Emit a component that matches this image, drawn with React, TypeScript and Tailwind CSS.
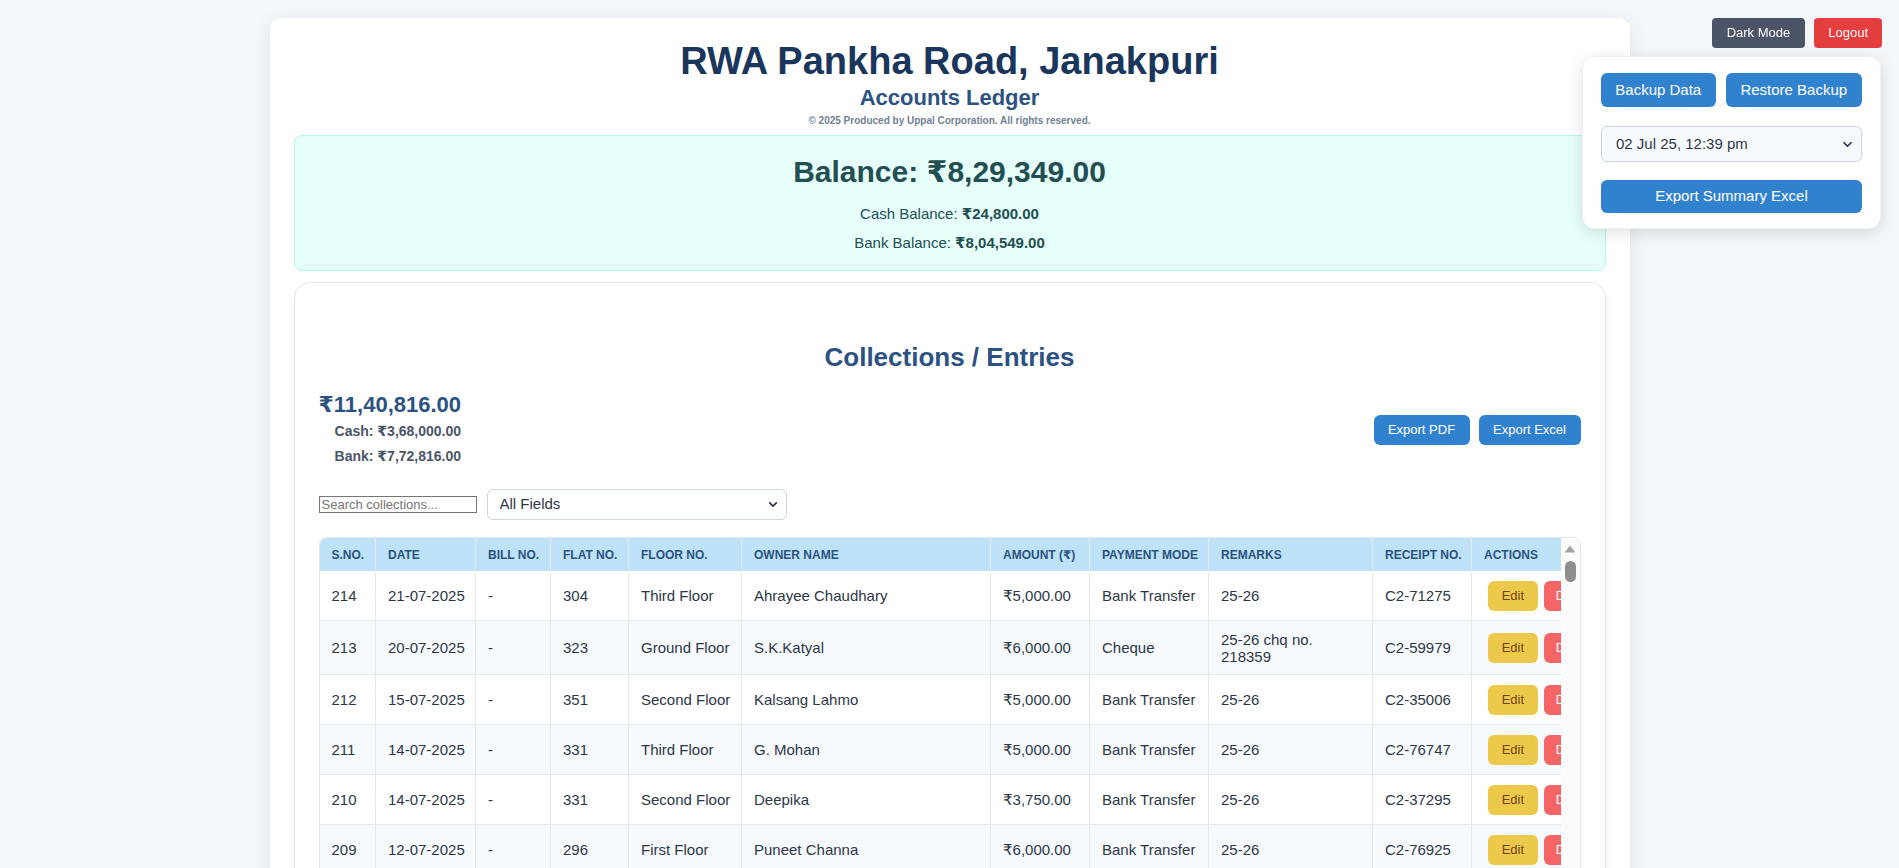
import React from 'react';

type Entry = {
  sno: number;
  date: string;
  bill: string;
  flat: string;
  floor: string;
  owner: string;
  amount: string;
  mode: string;
  remarks: string;
  receipt: string;
};

const entries: Entry[] = [
  { sno: 214, date: '21-07-2025', bill: '-', flat: '304', floor: 'Third Floor', owner: 'Ahrayee Chaudhary', amount: '₹5,000.00', mode: 'Bank Transfer', remarks: '25-26', receipt: 'C2-71275' },
  { sno: 213, date: '20-07-2025', bill: '-', flat: '323', floor: 'Ground Floor', owner: 'S.K.Katyal', amount: '₹6,000.00', mode: 'Cheque', remarks: '25-26 chq no. 218359', receipt: 'C2-59979' },
  { sno: 212, date: '15-07-2025', bill: '-', flat: '351', floor: 'Second Floor', owner: 'Kalsang Lahmo', amount: '₹5,000.00', mode: 'Bank Transfer', remarks: '25-26', receipt: 'C2-35006' },
  { sno: 211, date: '14-07-2025', bill: '-', flat: '331', floor: 'Third Floor', owner: 'G. Mohan', amount: '₹5,000.00', mode: 'Bank Transfer', remarks: '25-26', receipt: 'C2-76747' },
  { sno: 210, date: '14-07-2025', bill: '-', flat: '331', floor: 'Second Floor', owner: 'Deepika', amount: '₹3,750.00', mode: 'Bank Transfer', remarks: '25-26', receipt: 'C2-37295' },
  { sno: 209, date: '12-07-2025', bill: '-', flat: '296', floor: 'First Floor', owner: 'Puneet Channa', amount: '₹6,000.00', mode: 'Bank Transfer', remarks: '25-26', receipt: 'C2-76925' },
  { sno: 208, date: '11-07-2025', bill: '-', flat: '318', floor: 'Ground Floor', owner: 'R. Malhotra', amount: '₹5,000.00', mode: 'Cash', remarks: '25-26', receipt: 'C2-40211' },
];

const headers = ['S.No.', 'Date', 'Bill No.', 'Flat No.', 'Floor No.', 'Owner Name', 'Amount (₹)', 'Payment Mode', 'Remarks', 'Receipt No.', 'Actions'];
const widths = [56, 100, 75, 78, 113, 249, 99, 119, 164, 99, 146];

function Chevron({ className }: { className?: string }) {
  return (
    <svg viewBox="0 0 12 8" className={className} fill="none" stroke="currentColor" strokeWidth="2" strokeLinecap="round" strokeLinejoin="round">
      <path d="M2 2l4 4 4-4" />
    </svg>
  );
}

function TopControls() {
  return (
    <>
      <div className="fixed top-[18px] right-[17px] flex gap-[9px]">
        <button className="h-[30px] rounded-[4px] bg-[#4a5568] px-[15px] text-[13px] text-white">Dark Mode</button>
        <button className="h-[30px] rounded-[4px] bg-[#e53e3e] px-[14px] text-[13px] text-white">Logout</button>
      </div>
      <div className="fixed top-[56px] right-[18px] w-[299px] rounded-xl border border-[#edf2f7] bg-white px-[18px] pt-[16px] pb-[15px] shadow-[0_4px_16px_rgba(0,0,0,0.12)]">
        <div className="flex gap-[10px]">
          <button className="h-[34px] w-[115px] rounded-md bg-[#3182ce] text-[15px] text-white">Backup Data</button>
          <button className="h-[34px] w-[137px] rounded-md bg-[#3182ce] text-[15px] text-white">Restore Backup</button>
        </div>
        <div className="relative mt-[19px]">
          <select className="h-[36px] w-full appearance-none rounded-md border border-[#cbd5e0] bg-[#f7fafc] pl-[14px] text-[15px] text-[#2d3748]">
            <option>02 Jul 25, 12:39 pm</option>
          </select>
          <Chevron className="pointer-events-none absolute top-[15px] right-[9px] h-[7px] w-[11px] text-[#2d3748]" />
        </div>
        <button className="mt-[18px] h-[33px] w-full rounded-md bg-[#3182ce] text-[15px] text-white">Export Summary Excel</button>
      </div>
    </>
  );
}

function Scrollbar() {
  return (
    <div className="flex w-[19px] shrink-0 flex-col items-center bg-[#fbfbfb]">
      <svg viewBox="0 0 10 7" className="mt-[6px] h-[10px] w-[12px] text-[#a3a3a3]" fill="currentColor">
        <path d="M5 0.5L9.5 6.5H0.5Z" />
      </svg>
      <div className="mt-[7px] h-[21px] w-[11px] rounded-full bg-[#8f8f8f]" />
    </div>
  );
}

function EntriesTable() {
  return (
    <div className="mt-[17px] flex h-[420px] overflow-hidden rounded-lg border border-[#e2e8f0]">
      <div className="w-[1243px] overflow-hidden">
        <table className="w-[1298px] table-fixed border-collapse">
          <colgroup>
            {widths.map((w, i) => (
              <col key={i} style={{ width: w }} />
            ))}
          </colgroup>
          <thead>
            <tr className="h-[33px] bg-[#bee3f8]">
              {headers.map(h => (
                <th key={h} className="whitespace-nowrap border-r border-[#e2eef8] px-3 text-left text-[12px] font-bold uppercase text-[#2c5282]">
                  {h}
                </th>
              ))}
            </tr>
          </thead>
          <tbody className="text-[15px] leading-[17px] text-[#2d3748]">
            {entries.map((e, i) => (
              <tr key={e.sno} className={i % 2 === 1 ? 'bg-[#f7fafc]' : 'bg-white'}>
                {[e.sno, e.date, e.bill, e.flat, e.floor, e.owner, e.amount, e.mode].map((v, j) => (
                  <td key={j} className="whitespace-nowrap border-r border-b border-[#e2e8f0] px-3 py-[9.5px] align-middle">
                    {v}
                  </td>
                ))}
                <td className="border-r border-b border-[#e2e8f0] px-3 py-[9.5px] align-middle">{e.remarks}</td>
                <td className="whitespace-nowrap border-r border-b border-[#e2e8f0] px-3 py-[9.5px] align-middle">{e.receipt}</td>
                <td className="border-b border-[#e2e8f0] pl-4 pr-3 py-[9.5px]">
                  <div className="flex gap-[6px]">
                    <button className="h-[30px] w-[50px] rounded-md bg-[#ecc94b] text-[13px] text-[#744210]">Edit</button>
                    <button className="h-[30px] w-[62px] rounded-md bg-[#f56565] text-[13px] text-white">Delete</button>
                  </div>
                </td>
              </tr>
            ))}
          </tbody>
        </table>
      </div>
      <Scrollbar />
    </div>
  );
}

export default function App() {
  return (
    <div className="h-[868px] overflow-hidden bg-[#f4f7fa] font-['Liberation_Sans','DejaVu_Sans',Arial,sans-serif]">
      <div className="mx-auto mt-[18px] w-[1360px] rounded-xl bg-white px-6 pt-[21px] pb-8 shadow-[0_4px_20px_rgba(0,0,0,0.08)]">
        <h1 className="text-center text-[38px] font-bold leading-[44px] text-[#1a365d]">RWA Pankha Road, Janakpuri</h1>
        <h2 className="mt-[2px] text-center text-[22px] font-bold leading-[25px] text-[#2c5282]">Accounts Ledger</h2>
        <p className="mt-[5px] text-center text-[10px] font-bold leading-[12px] text-[#718096]">© 2025 Produced by Uppal Corporation. All rights reserved.</p>

        <div className="mt-[8px] rounded-lg border border-[#b2f5ea] bg-[#e6fffa] pt-[18px] pb-[19px] text-center text-[#234e52]">
          <div className="text-[30px] font-bold leading-[36px]">Balance: ₹8,29,349.00</div>
          <p className="mt-[15px] text-[15px] leading-[17px]">
            Cash Balance: <span className="font-bold">₹24,800.00</span>
          </p>
          <p className="mt-[12px] text-[15px] leading-[17px]">
            Bank Balance: <span className="font-bold">₹8,04,549.00</span>
          </p>
        </div>

        <div className="mt-[11px] rounded-2xl border border-[#e2e8f0] bg-white p-6 shadow-[0_2px_10px_rgba(0,0,0,0.05)]">
          <h3 className="mt-[35px] text-center text-[26px] font-bold leading-[30px] text-[#2c5282]">Collections / Entries</h3>

          <div className="mt-[19px] flex items-center justify-between">
            <div className="text-right">
              <div className="text-[22px] font-bold leading-[28px] text-[#2c5282]">₹11,40,816.00</div>
              <div className="text-[14px] font-bold leading-[25px] text-[#4a5568]">Cash: ₹3,68,000.00</div>
              <div className="text-[14px] font-bold leading-[25px] text-[#4a5568]">Bank: ₹7,72,816.00</div>
            </div>
            <div className="flex gap-[9px]">
              <button className="h-[30px] w-[96px] rounded-md bg-[#3182ce] text-[13px] text-white">Export PDF</button>
              <button className="h-[30px] w-[102px] rounded-md bg-[#3182ce] text-[13px] text-white">Export Excel</button>
            </div>
          </div>

          <div className="mt-[20px] flex items-center gap-[10px]">
            <input
              placeholder="Search collections..."
              className="h-[17px] w-[158px] border border-[#767676] px-[2px] text-[13px] placeholder:text-[#757575]"
            />
            <div className="relative">
              <select className="h-[31px] w-[300px] appearance-none rounded-md border border-[#cbd5e0] bg-white pl-[12px] text-[15px] text-[#2d3748]">
                <option>All Fields</option>
              </select>
              <Chevron className="pointer-events-none absolute top-[12px] right-[9px] h-[7px] w-[10px] text-[#2d3748]" />
            </div>
          </div>

          <EntriesTable />
        </div>
      </div>
      <TopControls />
    </div>
  );
}
